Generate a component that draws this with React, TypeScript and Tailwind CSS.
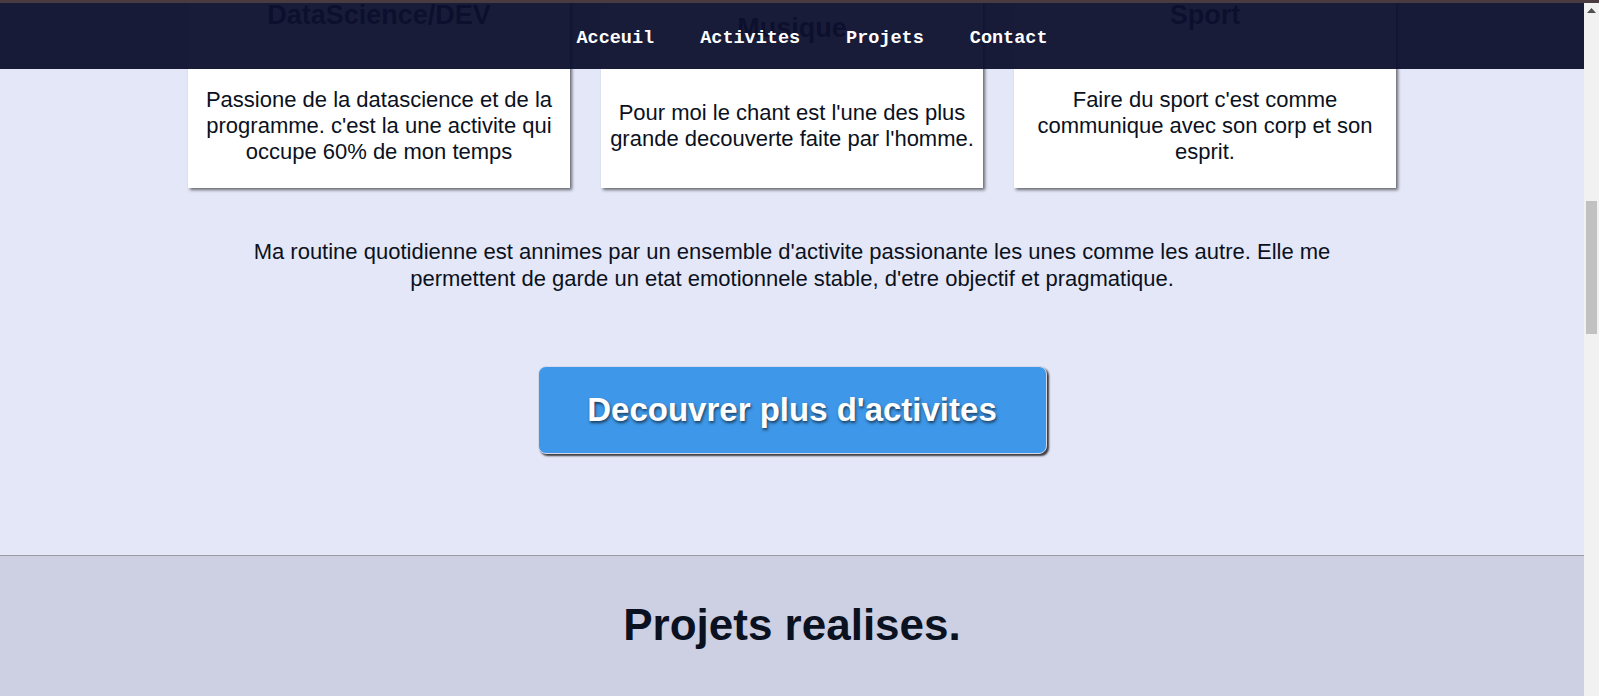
const cards = [
  {
    title: 'DataScience/DEV',
    text: "Passione de la datascience et de la programme. c'est la une activite qui occupe 60% de mon temps",
  },
  {
    title: 'Musique',
    text: "Pour moi le chant est l'une des plus grande decouverte faite par l'homme.",
  },
  {
    title: 'Sport',
    text: "Faire du sport c'est comme communique avec son corp et son esprit.",
  },
];

const links = ['Acceuil', 'Activites', 'Projets', 'Contact'];

const App = () => {
  return (
    <div className="relative flex h-[696px] overflow-hidden font-['Liberation_Sans',Arial,sans-serif] text-[#0b1120]">
      <main className="w-[1584px] shrink-0">
        {/* activites (page scrolled, card tops are under the nav) */}
        <section className="bg-[#e4e7f7] pb-[101px]">
          <div className="flex justify-center gap-[31px]">
            {cards.map((card) => (
              <div
                key={card.title}
                className="flex w-[382px] flex-col justify-center bg-white px-2 pb-[23px] text-center shadow-[2px_2px_3px_rgba(0,0,0,0.55)]"
              >
                <h2 className="text-[27px] font-bold leading-[31px] text-[#0b1026]">{card.title}</h2>
                <p className="mt-[56px] text-[22px] leading-[26px]">{card.text}</p>
              </div>
            ))}
          </div>

          <p className="mx-auto mt-[50px] w-[1120px] text-center text-[22px] leading-[27px]">
            Ma routine quotidienne est annimes par un ensemble d'activite passionante les unes comme les autre. Elle me
            permettent de garde un etat emotionnele stable, d'etre objectif et pragmatique.
          </p>

          <div className="mt-[74px] flex justify-center">
            <button className="h-[88px] w-[509px] rounded-[8px] border border-[#d4d8e8] bg-[#3e97e8] text-[33px] font-bold text-white shadow-[2px_2px_2px_rgba(0,0,0,0.75)] [text-shadow:1px_2px_3px_rgba(0,0,0,0.6)]">
              Decouvrer plus d'activites
            </button>
          </div>
        </section>

        <section className="h-[200px] border-t border-[#9c9ca4] bg-[#cdd0e2] pt-[36px]">
          <h2 className="text-center text-[44px] font-bold text-[#0a1120]">Projets realises.</h2>
        </section>
      </main>

      {/* scrollbar */}
      <div className="relative w-[15px] shrink-0 bg-[#f1f1f1] pt-[3px]">
        <div className="flex h-[14px] items-center justify-center">
          <svg width="9" height="5" viewBox="0 0 9 5">
            <path d="M4.5 0 L9 5 L0 5 Z" fill="#505050" />
          </svg>
        </div>
        <div className="ml-[2px] mt-[184px] h-[133px] w-[11px] bg-[#c1c1c1]" />
      </div>

      {/* fixed header over the content */}
      <header className="absolute inset-x-0 top-0">
        <div className="h-[3px] bg-[#4a3b41]" />
        <nav className="flex h-[66px] w-[1584px] items-center bg-[#0d102d]/95 pt-[6px]">
          <ul className="flex w-full justify-center gap-[46px] pl-[40px]">
            {links.map((l) => (
              <li key={l}>
                <a href="#" className="font-['Liberation_Mono','Courier_New',monospace] text-[18.5px] font-bold text-white">
                  {l}
                </a>
              </li>
            ))}
          </ul>
        </nav>
      </header>
    </div>
  );
};

export default App;
